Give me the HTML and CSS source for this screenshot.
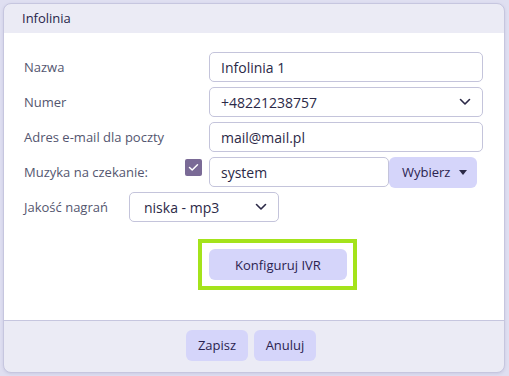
FILE: index.html
```html
<!DOCTYPE html>
<html lang="pl">
<head>
    <meta charset="UTF-8">
    <meta name="viewport" content="width=device-width, initial-scale=1.0">
    <title>Infolinia</title>
    <link rel="stylesheet" href="styles.css">
</head>
<body>
    <div class="dialog">
        <div class="dialog-header">Infolinia</div>

        <div class="dialog-body">
            <div class="row">
                <label class="label">Nazwa</label>
                <input class="field" type="text" value="Infolinia 1">
            </div>
            <div class="row">
                <label class="label">Numer</label>
                <div class="select wide">
                    <span>+48221238757</span>
                    <svg class="chevron" width="12" height="8" viewBox="0 0 12 8"><path d="M1.5 1.5 6 6l4.5-4.5" fill="none" stroke="#2b2947" stroke-width="1.6" stroke-linecap="round" stroke-linejoin="round"/></svg>
                </div>
            </div>
            <div class="row">
                <label class="label">Adres e-mail dla poczty</label>
                <input class="field" type="text" value="mail@mail.pl">
            </div>
            <div class="row">
                <label class="label label-check">
                    Muzyka na czekanie:
                    <span class="checkbox">
                        <svg width="11" height="9" viewBox="0 0 11 9"><path d="M1.5 4.5 4.2 7 9.5 1.8" fill="none" stroke="#fff" stroke-width="1.5" stroke-linecap="round" stroke-linejoin="round"/></svg>
                    </span>
                </label>
                <div class="input-group">
                    <input class="field music" type="text" value="system">
                    <button class="btn btn-dropdown">Wybierz <span class="caret"></span></button>
                </div>
            </div>
            <div class="row row-inline">
                <label class="label-inline">Jakość nagrań</label>
                <div class="select quality">
                    <span>niska - mp3</span>
                    <svg class="chevron" width="12" height="8" viewBox="0 0 12 8"><path d="M1.5 1.5 6 6l4.5-4.5" fill="none" stroke="#2b2947" stroke-width="1.6" stroke-linecap="round" stroke-linejoin="round"/></svg>
                </div>
            </div>

            <div class="ivr">
                <div class="highlight">
                    <button class="btn btn-ivr">Konfiguruj IVR</button>
                </div>
            </div>
        </div>

        <div class="dialog-footer">
            <button class="btn">Zapisz</button>
            <button class="btn">Anuluj</button>
        </div>
    </div>
</body>
</html>
```

FILE: styles.css
```css
body {
    margin: 0;
    padding: 3px;
    background-color: #dfdff1;
    font-family: 'Open Sans', 'Noto Sans', sans-serif;
    font-size: 13px;
    color: #2b2947;
}
.dialog {
    width: 500px;
    height: 368px;
    background-color: #ebebf5;
    border: 1px solid #c6c6df;
    border-radius: 8px;
    overflow: hidden;
    display: flex;
    flex-direction: column;
    box-shadow: 0 1px 3px rgba(90, 90, 150, 0.15);
}
.dialog-header {
    height: 29px;
    line-height: 29px;
    padding-left: 18px;
    font-size: 13px;
    color: #27254a;
}
.dialog-body {
    background-color: #fff;
    height: 268px;
    padding: 19px 21px 0 20px;
    border-bottom: 1px solid #c6c6df;
}
.row {
    display: flex;
    align-items: center;
    height: 30px;
    margin-bottom: 5px;
}
.label {
    width: 185px;
    flex-shrink: 0;
    color: #54566f;
}
.label-check {
    display: flex;
    align-items: center;
    justify-content: space-between;
    padding-right: 7px;
    box-sizing: border-box;
}
.checkbox {
    width: 17px;
    height: 17px;
    border-radius: 2px;
    background-color: #7a6a96;
    display: flex;
    align-items: center;
    justify-content: center;
    margin-top: -9px;
}
.field, .select {
    box-sizing: border-box;
    height: 30px;
    border: 1px solid #c4c4db;
    border-radius: 5px;
    padding: 0 11px;
    font-family: inherit;
    font-size: 14px;
    color: #2b2947;
    background-color: #fff;
}
.field {
    width: 274px;
    outline: none;
}
.select {
    display: flex;
    align-items: center;
    justify-content: space-between;
}
.select.wide {
    width: 274px;
}
.chevron {
    margin-right: 0;
}
.input-group {
    display: flex;
    align-items: center;
}
.field.music {
    width: 180px;
}
.btn {
    font-family: inherit;
    font-size: 13px;
    color: #2b2350;
    background-color: #d5d5fa;
    border: none;
    border-radius: 6px;
    height: 31px;
    padding: 0 12px;
    cursor: pointer;
}
.btn-dropdown {
    width: 88px;
    display: flex;
    align-items: center;
    justify-content: space-between;
    padding: 0 10px 0 13px;
}
.caret {
    width: 0;
    height: 0;
    border-left: 4px solid transparent;
    border-right: 4px solid transparent;
    border-top: 5px solid #2b2947;
}
.row-inline {
    margin-top: 1px;
}
.label-inline {
    color: #54566f;
    width: 105px;
    flex-shrink: 0;
}
.select.quality {
    width: 150px;
    padding: 0 11px 0 14px;
    font-size: 14px;
}
.ivr {
    padding: 12px 0 0 174px;
}
.highlight {
    display: inline-block;
    border: 4px solid #a4e31b;
    padding: 6px 6px 6px 7px;
}
.btn-ivr {
    width: 138px;
    display: block;
}
.dialog-footer {
    flex: 1;
    display: flex;
    justify-content: center;
    align-items: center;
    gap: 6px;
    padding-right: 6px;
    padding-bottom: 3px;
}
.dialog-footer .btn {
    width: 62px;
    padding: 0;
}
```
